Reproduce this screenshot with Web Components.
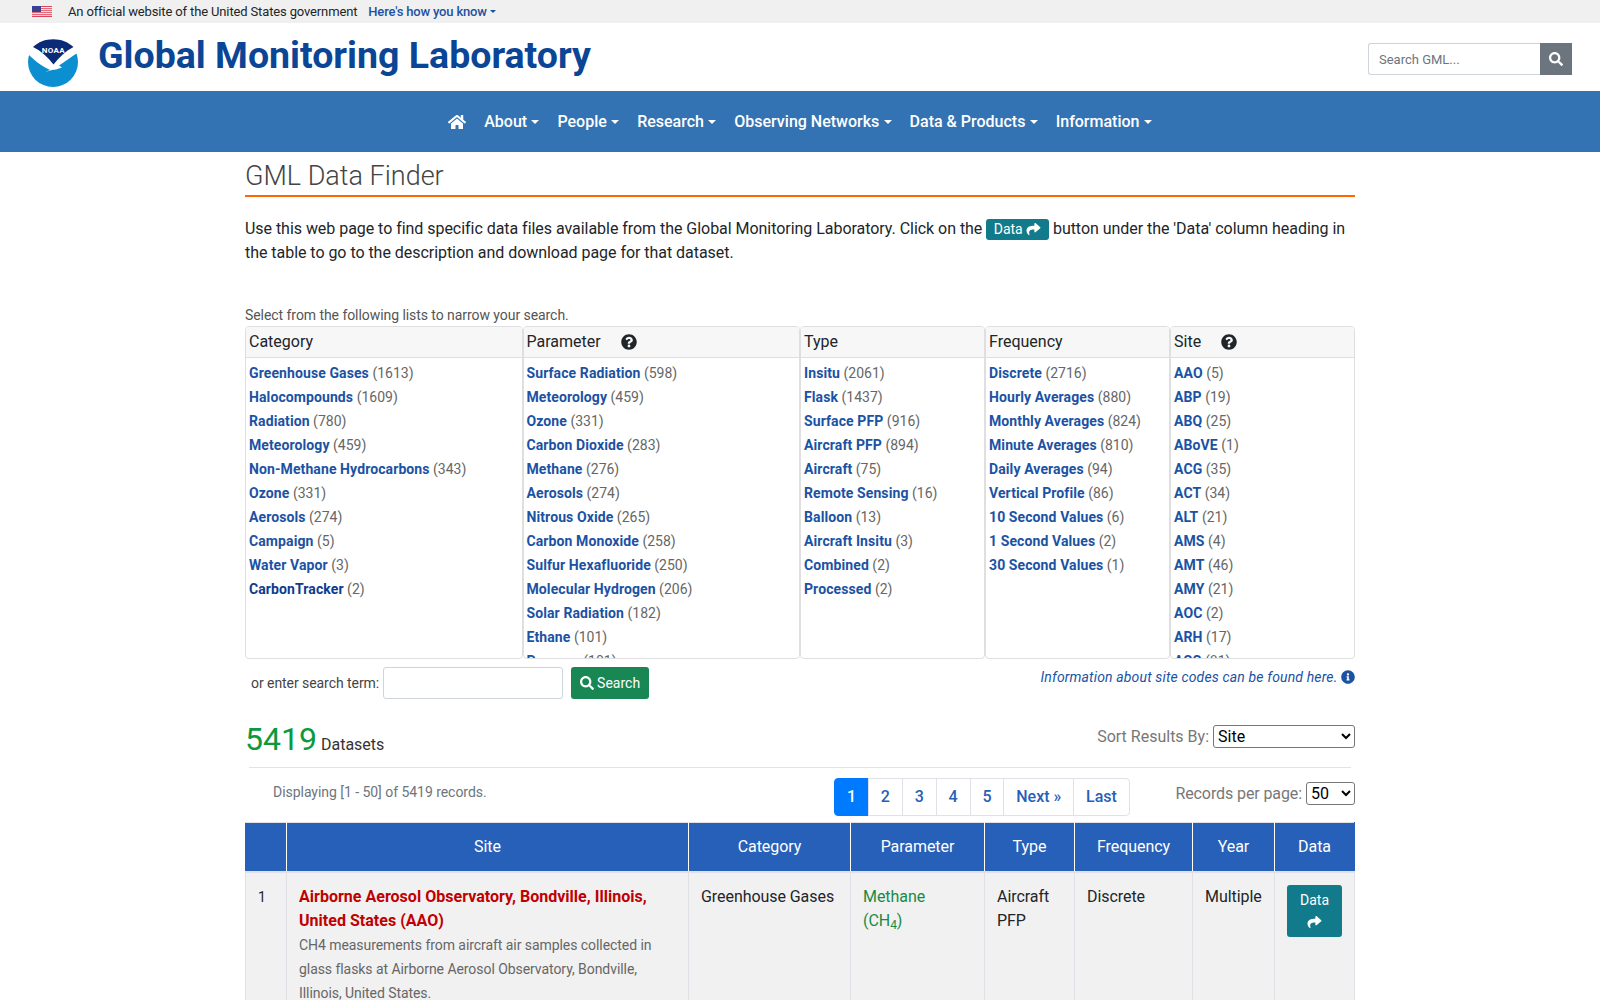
<!DOCTYPE html>
<html lang="en">
<head>
<meta charset="utf-8">
<title>GML Data Finder</title>
<style>
html,body{margin:0;height:1000px;overflow:hidden;background:#fff}
body{font-family:Roboto,"Liberation Sans",sans-serif;font-size:16px;line-height:24px;color:#212529}
</style>
</head>
<body>
<gml-gov-banner></gml-gov-banner>
<gml-masthead></gml-masthead>
<gml-navbar></gml-navbar>
<gml-finder></gml-finder>

<script>
const ICON = {
  home:['0 0 576 512','M280.37 148.26L96 300.11V464a16 16 0 0 0 16 16l112.06-.29a16 16 0 0 0 15.92-16V368a16 16 0 0 1 16-16h64a16 16 0 0 1 16 16v95.64a16 16 0 0 0 16 16.05L464 480a16 16 0 0 0 16-16V300L295.67 148.26a12.19 12.19 0 0 0-15.3 0zM571.6 251.47L488 182.56V44.05a12 12 0 0 0-12-12h-56a12 12 0 0 0-12 12v72.61L318.47 43a48 48 0 0 0-61 0L4.34 251.47a12 12 0 0 0-1.6 16.9l25.5 31A12 12 0 0 0 45.15 301l235.22-193.74a12.19 12.19 0 0 1 15.3 0L530.9 301a12 12 0 0 0 16.9-1.6l25.5-31a12 12 0 0 0-1.7-16.93z'],
  search:['0 0 512 512','M505 442.7L405.3 343c-4.5-4.5-10.6-7-17-7H372c27.6-35.3 44-79.7 44-128C416 93.1 322.9 0 208 0S0 93.1 0 208s93.1 208 208 208c48.3 0 92.7-16.4 128-44v16.3c0 6.4 2.5 12.5 7 17l99.7 99.7c9.4 9.4 24.6 9.4 33.9 0l28.3-28.3c9.4-9.4 9.4-24.6.1-34zM208 336c-70.7 0-128-57.2-128-128 0-70.7 57.2-128 128-128 70.7 0 128 57.2 128 128 0 70.7-57.2 128-128 128z'],
  share:['0 0 512 512','M503.691 189.836L327.687 37.851C312.281 24.546 288 35.347 288 56.015v80.053C127.371 137.907 0 170.1 0 322.326c0 61.441 39.581 122.309 83.333 154.132 13.653 9.931 33.111-2.533 28.077-18.631C66.066 312.814 132.917 274.316 288 272.085V360c0 20.7 24.3 31.453 39.687 18.164l176.004-152c11.071-9.562 11.086-26.753 0-36.328z'],
  question:['0 0 512 512','M504 256c0 136.997-111.043 248-248 248S8 392.997 8 256C8 119.083 119.043 8 256 8s248 111.083 248 248zM262.655 90c-54.497 0-89.255 22.957-116.549 63.758-3.536 5.286-2.353 12.415 2.715 16.258l34.699 26.31c5.205 3.947 12.621 3.008 16.665-2.122 17.864-22.658 30.113-35.797 57.303-35.797 20.429 0 45.698 13.148 45.698 32.958 0 14.976-12.363 22.667-32.534 33.976C247.128 238.528 216 254.941 216 296v4c0 6.627 5.373 12 12 12h56c6.627 0 12-5.373 12-12v-1.333c0-28.462 83.186-29.647 83.186-106.667 0-58.002-60.165-102-116.531-102zM256 338c-25.365 0-46 20.635-46 46 0 25.364 20.635 46 46 46s46-20.636 46-46c0-25.365-20.635-46-46-46z'],
  info:['0 0 512 512','M256 8C119.043 8 8 119.083 8 256c0 136.997 111.043 248 248 248s248-111.003 248-248C504 119.083 392.957 8 256 8zm0 110c23.196 0 42 18.804 42 42s-18.804 42-42 42-42-18.804-42-42 18.804-42 42-42zm56 254c0 6.627-5.373 12-12 12h-88c-6.627 0-12-5.373-12-12v-24c0-6.627 5.373-12 12-12h12v-64h-12c-6.627 0-12-5.373-12-12v-24c0-6.627 5.373-12 12-12h64c6.627 0 12 5.373 12 12v100h12c6.627 0 12 5.373 12 12v24z']
};
const svg=(n,w,h,c='currentColor',extra='')=>`<svg xmlns="http://www.w3.org/2000/svg" viewBox="${ICON[n][0]}" width="${w}" height="${h}" fill="${c}" style="display:inline-block;vertical-align:-.125em;${extra}"><path d="${ICON[n][1]}"/></svg>`;

class Base extends HTMLElement{
  constructor(){super();this.attachShadow({mode:'open'});}
  connectedCallback(){this.shadowRoot.innerHTML=this.render();}
}

class GovBanner extends Base{render(){return `<style>
:host{display:flex;align-items:center;height:23px;background:#f0f0f0;padding-left:32px;font-size:13px;line-height:23px;color:#212529;letter-spacing:-.14px}
svg{display:block;margin-right:16px}
a{color:#1b52a3;font-weight:500;margin-left:11px;text-decoration:none;display:inline-flex;align-items:center;letter-spacing:-.17px}
a::after{content:"";margin-left:3px;border-top:3.5px solid;border-left:3.5px solid transparent;border-right:3.5px solid transparent}
</style>
<svg width="20" height="11" viewBox="0 0 20 11"><rect width="20" height="11" fill="#fff"/><g fill="#d9455a"><rect width="20" height="1.1"/><rect y="2.2" width="20" height="1"/><rect y="4.2" width="20" height="1"/><rect y="6.2" width="20" height="1"/><rect y="8.2" width="20" height="1"/><rect y="9.9" width="20" height="1.1"/></g><rect width="9" height="6" fill="#3a3f8f"/></svg>
<span>An official website of the United States government</span><a href="#">Here's how you know</a>`;}}
customElements.define('gml-gov-banner',GovBanner);

class Masthead extends Base{render(){return `<style>
:host{display:flex;align-items:center;height:68px;background:#fff;padding:0 28px}
.logo{flex:none;display:block;margin-top:10px}
h1{margin:0 0 5px 20px;font-size:37.5px;line-height:44px;font-weight:700;color:#0b4595;white-space:nowrap;flex:1}
form{display:flex;flex:none;margin:4px 0 0}
input{box-sizing:border-box;width:172px;height:32px;border:1px solid #ced4da;border-right:0;border-radius:3px 0 0 3px;padding:0 10px;font:13px Roboto,sans-serif;color:#495057;outline:0}
input::placeholder{color:#6c757d;opacity:1}
button{width:32px;height:32px;border:0;background:#6c757d;color:#fff;padding:0;display:flex;align-items:center;justify-content:center}
</style>
<svg class="logo" width="50" height="50" viewBox="0 0 50 50">
<ellipse cx="25" cy="25" rx="25" ry="25" fill="#0b8fd0"/>
<path d="M0 0H50V15.500C43 20 36 25 31 28.500L34 30.500L28 32.500L24 33L17 35L22 33C13 29 5 22 0 17Z" fill="#fff"/>
<path d="M25.300 2.300C33 2.300 40 5 45.500 10C38 14 31 20 25.500 27.500C20 20 13 14 5 10C10.500 5 17 2.300 25.300 2.300Z" fill="#0b2a78"/>
<text x="25.300" y="15.500" text-anchor="middle" font-family="Roboto,sans-serif" font-weight="700" font-size="8" fill="#fff" letter-spacing=".3">NOAA</text>
</svg>
<h1>Global Monitoring Laboratory</h1>
<form onsubmit="return false"><input placeholder="Search GML..."><button aria-label="Search">${svg('search',14,14,'#fff','vertical-align:0')}</button></form>`;}}
customElements.define('gml-masthead',Masthead);

class NavItem extends Base{render(){return `<style>
:host{display:block}
a{display:flex;align-items:center;padding:0 9px;color:#fff;font-weight:500;font-size:16px;line-height:24px;text-decoration:none;white-space:nowrap}
a::after{content:"";margin-left:4.3px;border-top:4.8px solid;border-left:4.8px solid transparent;border-right:4.8px solid transparent}
</style><a href="#"><slot></slot></a>`;}}
customElements.define('gml-nav-item',NavItem);

class Navbar extends Base{render(){return `<style>
:host{display:flex;align-items:center;justify-content:center;height:61px;background:#3373b3;padding-left:9px}
a{display:block;color:#fff;line-height:0;margin-right:9px}
</style>
<a href="#" aria-label="Home">${svg('home',18,16,'#fff','vertical-align:0')}</a>
<gml-nav-item>About</gml-nav-item><gml-nav-item>People</gml-nav-item><gml-nav-item>Research</gml-nav-item><gml-nav-item>Observing Networks</gml-nav-item><gml-nav-item>Data &amp; Products</gml-nav-item><gml-nav-item>Information</gml-nav-item>`;}}
customElements.define('gml-navbar',Navbar);

class DataButton extends Base{render(){const block=this.hasAttribute('block');return `<style>
:host{display:inline-block;vertical-align:baseline}
a{display:block;background:#117a8b;color:#fff;text-decoration:none;border-radius:3px;font-size:14px;text-align:center;${block?'padding:4px 0;width:55px;height:44px;line-height:22px;':'padding:0 8px 0 7.5px;line-height:21px;'}}
</style><a href="#">Data${block?'<br>':' '}${svg('share',15,14,'#fff','vertical-align:-2px')}</a>`;}}
customElements.define('gml-data-button',DataButton);

class FilterItem extends Base{render(){return `<style>
:host{display:block;font-size:14px;line-height:24px;white-space:nowrap;color:#666}
a{color:var(--link,#1b52a3);font-weight:700;text-decoration:none;letter-spacing:.1px}
</style><a href="#">${this.getAttribute('name')}</a> (${this.getAttribute('count')})`;}}
customElements.define('gml-filter-item',FilterItem);

class FilterCard extends Base{render(){const help=this.hasAttribute('help');return `<style>
:host{display:flex;flex-direction:column;box-sizing:border-box;border:1px solid #dfdfdf;border-radius:4px;height:333px;background:#fff;min-width:0}
header{flex:none;box-sizing:border-box;height:31px;padding:3px 3px;background:#f7f7f7;border-bottom:1px solid #dfdfdf;border-radius:3px 3px 0 0;font-size:16px;line-height:24px;color:#212529;display:flex;align-items:center}
header svg{margin-left:20px}
.list{flex:1;overflow:hidden;padding:3px 3px 0;min-height:0}
</style><header>${this.getAttribute('heading')}${help?svg('question',16,16,'#212529'):''}</header><div class="list"><slot></slot></div>`;}}
customElements.define('gml-filter-card',FilterCard);

class FilterGroup extends Base{
  render(){
    return `<style>:host{display:grid;grid-template-columns:3fr 3fr 2fr 2fr 2fr}</style><slot></slot>`;
  }
}
customElements.define('gml-filter-group',FilterGroup);

class Pager extends Base{render(){
  const pages=['1','2','3','4','5','Next »','Last'];
  return `<style>
:host{display:flex}
a{display:block;box-sizing:border-box;height:38px;padding:6px 11.9px;margin-left:-1px;border:1px solid #dee2e6;background:#fff;color:#2760b8;font-weight:500;font-size:16px;line-height:24px;text-decoration:none}
a:first-of-type{margin-left:0;background:#007bff;border-color:#007bff;color:#fff;border-radius:4px 0 0 4px}
a:last-of-type{border-radius:0 4px 4px 0}
</style>${pages.map(p=>`<a href="#">${p}</a>`).join('')}`;}}
customElements.define('gml-pager',Pager);

class ResultsTable extends Base{render(){
  return `<style>
:host{display:block;font-size:16px;line-height:24px}
table{width:1109px;table-layout:fixed;border-collapse:collapse;color:#212529}
th{height:48px;padding:0;background:#2760b8;color:#fff;font-weight:400;text-align:center;border:1px solid #fff;border-top:1px solid #dee2e6;border-bottom:2px solid #dee2e6;letter-spacing:-.06px}
th:first-child{border-left:1px solid #2760b8}
th:last-child{border-right:1px solid #2760b8}
td{background:#f1f1f1;padding:12px;vertical-align:top;border:1px solid #dee2e6;letter-spacing:-.06px}
td.num{font-size:14px;letter-spacing:0}
.site{color:#c00000;font-weight:700;text-decoration:none;display:block;letter-spacing:.02px}
.desc{font-size:14px;color:#666;display:block;letter-spacing:-.06px}
.param{color:#198a45}
sub{font-size:75%;line-height:0;position:relative;bottom:-.25em;vertical-align:baseline}
</style>
<table>
<colgroup><col style="width:41px"><col style="width:402px"><col style="width:162px"><col style="width:134px"><col style="width:90px"><col style="width:118px"><col style="width:82px"><col style="width:80px"></colgroup>
<thead><tr><th></th><th>Site</th><th>Category</th><th>Parameter</th><th>Type</th><th>Frequency</th><th>Year</th><th>Data</th></tr></thead>
<tbody><tr>
<td class="num">1</td>
<td><a class="site" href="#">Airborne Aerosol Observatory, Bondville, Illinois, United States (AAO)</a><span class="desc">CH4 measurements from aircraft air samples collected in glass flasks at Airborne Aerosol Observatory, Bondville, Illinois, United States.</span></td>
<td>Greenhouse Gases</td>
<td class="param">Methane<br>(CH<sub>4</sub>)</td>
<td>Aircraft PFP</td>
<td>Discrete</td>
<td>Multiple</td>
<td style="letter-spacing:0"><gml-data-button block></gml-data-button></td>
</tr></tbody></table>`;}}
customElements.define('gml-results-table',ResultsTable);

class Finder extends Base{render(){
  const cards=[
   ['Category',0,[['Greenhouse Gases',1613],['Halocompounds',1609],['Radiation',780],['Meteorology',459],['Non-Methane Hydrocarbons',343],['Ozone',331],['Aerosols',274],['Campaign',5],['Water Vapor',3],['CarbonTracker',2]]],
   ['Parameter',1,[['Surface Radiation',598],['Meteorology',459],['Ozone',331],['Carbon Dioxide',283],['Methane',276],['Aerosols',274],['Nitrous Oxide',265],['Carbon Monoxide',258],['Sulfur Hexafluoride',250],['Molecular Hydrogen',206],['Solar Radiation',182],['Ethane',101],['Propane',101]]],
   ['Type',0,[['Insitu',2061],['Flask',1437],['Surface PFP',916],['Aircraft PFP',894],['Aircraft',75],['Remote Sensing',16],['Balloon',13],['Aircraft Insitu',3],['Combined',2],['Processed',2]]],
   ['Frequency',0,[['Discrete',2716],['Hourly Averages',880],['Monthly Averages',824],['Minute Averages',810],['Daily Averages',94],['Vertical Profile',86],['10 Second Values',6],['1 Second Values',2],['30 Second Values',1]]],
   ['Site',1,[['AAO',5],['ABP',19],['ABQ',25],['ABoVE',1],['ACG',35],['ACT',34],['ALT',21],['AMS',4],['AMT',46],['AMY',21],['AOC',2],['ARH',17],['ASC',81]]]
  ];
  return `<style>
:host{display:block;width:1110px;margin:0 auto}
h2{margin:0;padding-top:7px;height:36px;font-size:27px;line-height:34px;font-weight:300;color:#444;border-bottom:2px solid #f60}
.intro{margin:20px 0 0;font-size:16px;line-height:24px;height:79px;color:#212529;letter-spacing:-.04px}
.hint{font-size:14px;line-height:21px;color:#555;height:21px;margin-top:9px;letter-spacing:-.06px}
.term{display:flex;justify-content:space-between;height:51.5px;margin-top:7.5px}
.term form{display:flex;align-items:center;height:32px;margin:0 0 0 6px;font-size:14px;color:#444;letter-spacing:-.06px}
.term input{box-sizing:border-box;width:180px;height:32px;border:1px solid #ced4da;border-radius:3px;margin:0 8px 0 4px;background:#fff;outline:0}
.term button{box-sizing:border-box;width:78px;height:32px;border:0;border-radius:3px;background:#198754;color:#fff;font:14px Roboto,sans-serif;padding:0;display:flex;align-items:center;justify-content:center;gap:3px}
.site-info{font-size:14px;line-height:21px;font-style:italic;color:#1b52a3;text-decoration:none;height:21px;display:block;white-space:nowrap;letter-spacing:.15px;margin-top:.5px}
.count{display:flex;justify-content:space-between;align-items:flex-start;height:49px}
.total{font-size:32px;line-height:42px;font-weight:400;color:#0a9a3c}
.total span{font-size:16px;font-weight:400;color:#333;margin-left:4px}
.sort{font-size:16px;line-height:24px;color:#777;display:flex;align-items:center;gap:4px;height:24px;padding-top:6.5px}
select{font:16px Roboto,sans-serif;height:23px;box-sizing:border-box;padding:0;border:1px solid #767676;border-radius:3px;background:#fff;color:#000}
hr{margin:0 4px;border:0;border-top:1px solid #e3e3e3;height:0}
.paging{display:flex;align-items:flex-start;height:54px;padding-top:10px;box-sizing:border-box}
.shown{font-size:14px;line-height:21px;color:#6c757d;padding:4px 0 0 28px;width:561px;flex:none;letter-spacing:-.04px}
.per{margin-left:auto;display:flex;gap:4px;align-items:center;color:#777;padding-top:3.5px;height:24px;letter-spacing:-.1px}
.per select{width:49px;letter-spacing:0}
</style>
<h2>GML Data Finder</h2>
<p class="intro">Use this web page to find specific data files available from the Global Monitoring Laboratory. Click on the <gml-data-button></gml-data-button> button under the 'Data' column heading in the table to go to the description and download page for that dataset.</p>
<div class="hint">Select from the following lists to narrow your search.</div>
<gml-filter-group>
${cards.map(c=>`<gml-filter-card heading="${c[0]}"${c[1]?' help':''}>${c[2].map(i=>`<gml-filter-item name="${i[0]}" count="${i[1]}"${i[0]=='CarbonTracker'?' style="--link:#0a3d8f"':''}></gml-filter-item>`).join('')}</gml-filter-card>`).join('')}
</gml-filter-group>
<div class="term">
<form onsubmit="return false"><label for="q">or enter search term:</label><input id="q"><button>${svg('search',14,14,'#fff','vertical-align:0')}Search</button></form>
<a class="site-info" href="#">Information about site codes can be found here. ${svg('info',14,14)}</a>
</div>
<div class="count">
<div class="total">5419<span>Datasets</span></div>
<label class="sort">Sort Results By: <select style="width:142px"><option>Site</option></select></label>
</div>
<hr>
<div class="paging">
<div class="shown">Displaying [1 - 50] of 5419 records.</div>
<gml-pager></gml-pager>
<label class="per">Records per page: <select><option>50</option></select></label>
</div>
<gml-results-table></gml-results-table>`;}}
customElements.define('gml-finder',Finder);
</script>
</body>
</html>
